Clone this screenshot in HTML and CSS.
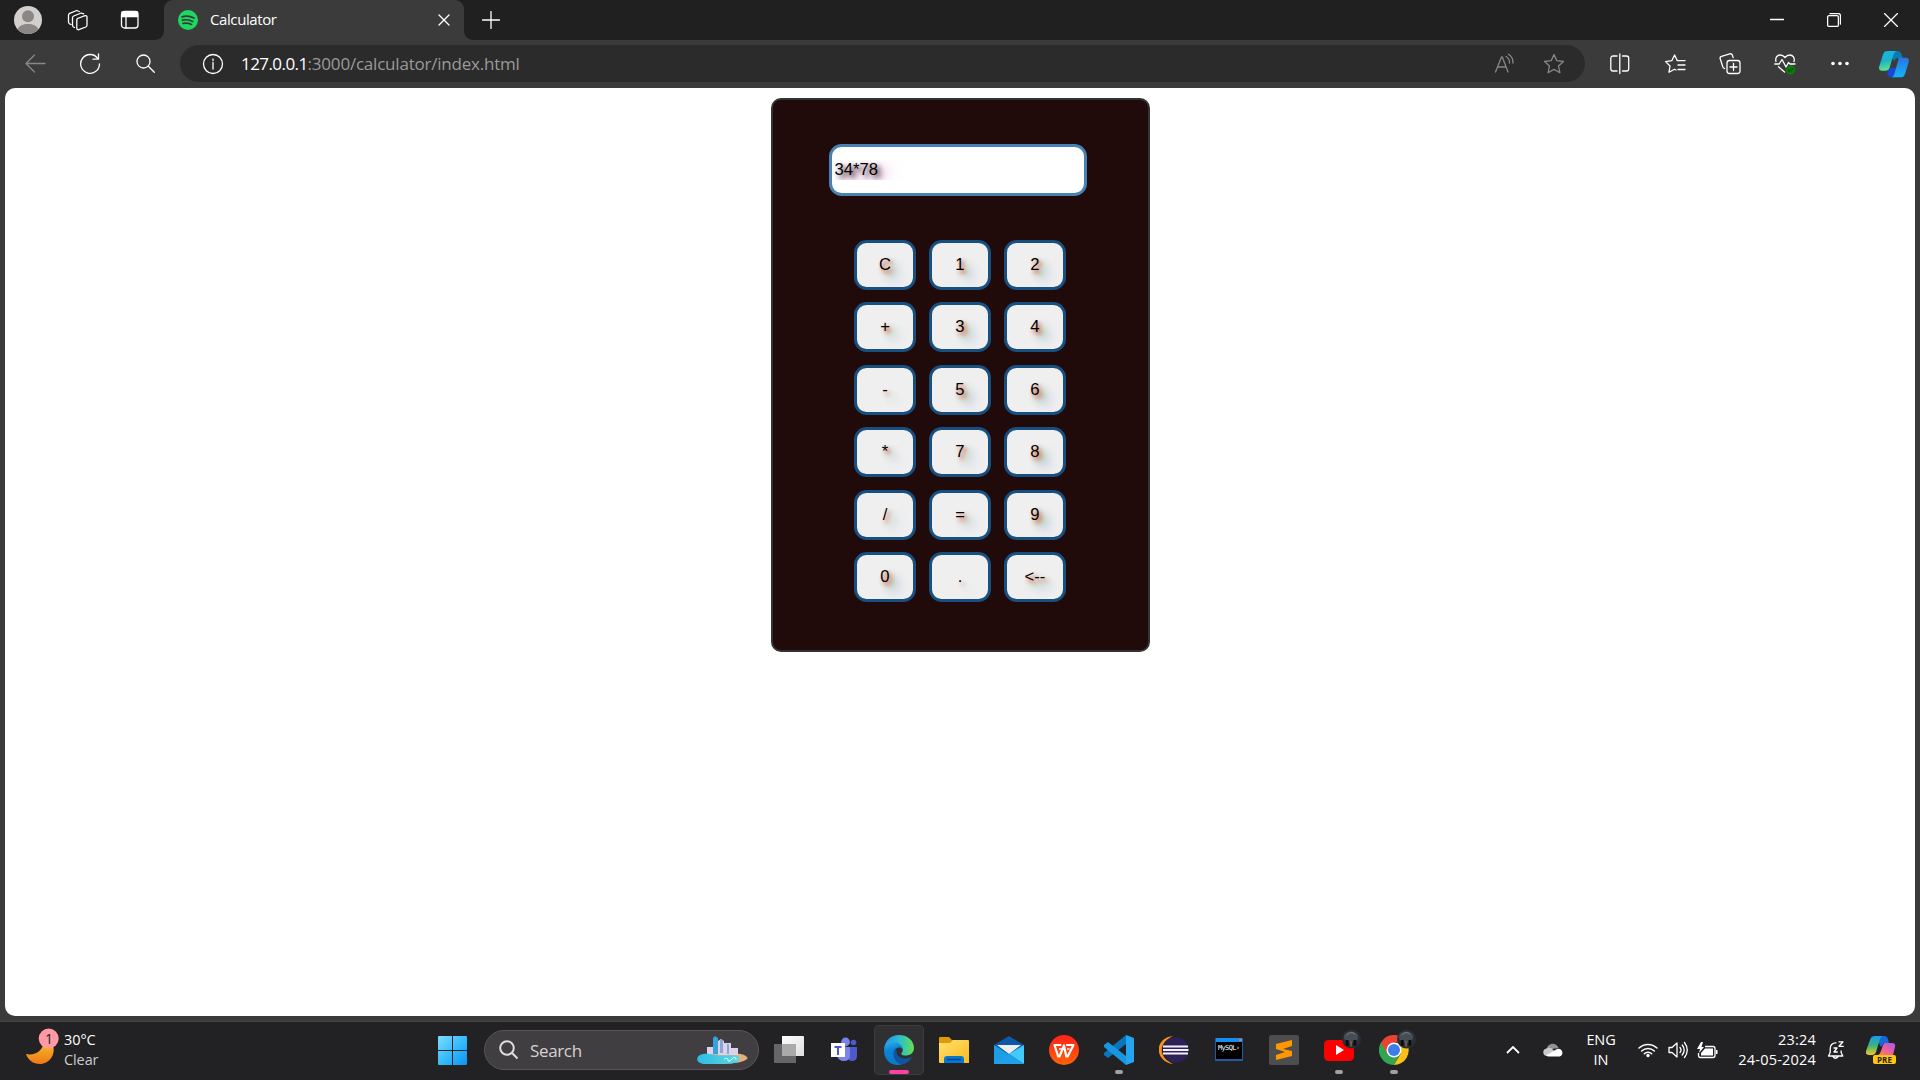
FILE: index.html
```html
<!DOCTYPE html>
<html lang="en">
<head>
<meta charset="utf-8">
<title>Calculator</title>
<link rel="stylesheet" href="styles.css">
</head>
<body>
<div class="desktop">
  <header class="tabbar">
    <div class="tab-tools">
      <svg class="avatar" viewBox="0 0 28 28"><circle cx="14" cy="14" r="14" fill="#d2d0ce"/><circle cx="14" cy="10.2" r="6" fill="#8a8785"/><path d="M3.500 23.200C5.500 19.500 9 18 14 18s8.500 1.500 10.500 5.200A14 14 0 0 1 3.500 23.200z" fill="#8a8785"/></svg>
      <svg class="workspaces line" viewBox="0 0 22 22"><path d="M10.500 9.500l7.500-2.800a1.500 1.500 0 0 1 2 1.400v8.200a2 2 0 0 1-1.200 1.700l-7 2.700a1.500 1.500 0 0 1-2-1.400v-8a2 2 0 0 1 .7-1.800zM7.500 18.500l-1-.5a2 2 0 0 1-1-1.700V8.800a2 2 0 0 1 1.200-1.800l7.500-3 2.500.9M4 15.500l-1.500-.7a2 2 0 0 1-1-1.700V6.200a2 2 0 0 1 1.200-1.800l7-2.900 2.500 1"/></svg>
      <svg class="tab-menu line" viewBox="0 0 20 20"><rect x="1.500" y="1.500" width="16.500" height="16.500" rx="3"/><path d="M2 2h15.500v4.500H2z" fill="#fff"/><path d="M6 6v12"/></svg>
    </div>
    <div class="tab">
      <svg class="favicon" viewBox="0 0 20 20"><circle cx="10" cy="10" r="10" fill="#1ed760"/><path d="M4 6.800q6.500-1.600 12 1.200M4.500 10.200q5.500-1.300 10.300 1.200M5 13.400q4.500-1 8.500 1" fill="none" stroke="#333b36" stroke-width="1.700" stroke-linecap="round"/></svg>
      <span class="tab-title">Calculator</span>
      <svg class="tab-close line" viewBox="0 0 12 12"><path d="M1 1l10 10M11 1L1 11"/></svg>
    </div>
    <svg class="new-tab line" viewBox="0 0 18 18"><path d="M9 .5v17M.5 9h17"/></svg>
    <div class="window-controls">
      <svg class="line" viewBox="0 0 14 14"><path d="M.5 6.500h13"/></svg>
      <svg class="line" viewBox="0 0 14 14"><rect x=".6" y="2.600" width="10.800" height="10.800" rx="1.500"/><path d="M3 .6h8.500a2 2 0 0 1 2 2V11"/></svg>
      <svg class="line" viewBox="0 0 14 14"><path d="M.5.5l13 13M13.500.5l-13 13"/></svg>
    </div>
  </header>
  <nav class="toolbar">
    <div class="nav-tools">
      <svg class="line dim" viewBox="0 0 22 22"><path d="M21 10.500H2M10.500 2L2 10.500l8.500 8.500"/></svg>
      <svg class="line" viewBox="0 0 22 22"><path d="M18.800 5.500A9.400 9.400 0 1 0 20.500 11M14 6.200h5.500V1"/></svg>
      <svg class="line" viewBox="0 0 22 22"><circle cx="9.500" cy="8.500" r="6.500"/><path d="M14.300 13.300l6 6"/></svg>
    </div>
    <div class="address">
      <svg class="line info" viewBox="0 0 22 22"><circle cx="11" cy="11" r="9.500"/><path d="M11 9.500v6.500M11 6v1.500"/></svg>
      <p class="url"><span class="host">127.0.0.1</span>:3000/calculator/index.html</p>
      <svg class="line dim read" viewBox="0 0 22 22"><path d="M1.500 19L7.500 4h.8l5.700 15M3.800 14h8.200M12 3.500a7 7 0 0 1 3.500 6.500M14.500 1.200A10 10 0 0 1 19 10"/></svg>
      <svg class="line dim star" viewBox="0 0 22 22"><path d="M11 1.600l2.800 6.100 6.700.8-5 4.600 1.400 6.600-5.900-3.300-5.900 3.300 1.400-6.600-5-4.600 6.700-.8z"/></svg>
    </div>
    <div class="browser-tools">
      <svg class="line" viewBox="0 0 22 22"><path d="M8 3H4a2.200 2.200 0 0 0-2.200 2.200v10.600A2.200 2.200 0 0 0 4 18h4M13.500 3h4a2.200 2.200 0 0 1 2.200 2.200v10.600a2.200 2.200 0 0 1-2.200 2.200h-4M10.800.8v19.800"/></svg>
      <svg class="line" viewBox="0 0 22 22"><path d="M12 17l-1.500-.8-5.500 3 1-6.200-4.400-4.400 6.200-.9L10.600 2l2.700 5.700H21M14 12h7M14 16.500h7"/></svg>
      <svg class="line" viewBox="0 0 22 22"><rect x="8" y="7.500" width="13" height="13" rx="2.500"/><path d="M14.500 10.500v7M11 14h7M5.500 15.500a2.500 2.500 0 0 1-1.800-2L1.200 5.800a2 2 0 0 1 1.300-2.500l8.200-2.400a2.300 2.300 0 0 1 2.800 1.500l.6 2.300"/></svg>
      <svg class="line" viewBox="0 0 22 22"><path d="M2 8.500C1 5 3 2 6.200 2 8.500 2 10 3.300 11 4.500 12 3.300 13.500 2 15.800 2 19 2 21 5 20 8.500M.8 11h4.400L8 6.500l4 7.500 2.500-4.500 1.500 1.500h5M4.500 13.800l6 5.200"/><circle cx="16.500" cy="17" r="4.700" fill="#0e7a0d" stroke="none"/><path d="M14.300 17l1.500 1.500 2.800-2.800" stroke="#074e07"/></svg>
      <svg viewBox="0 0 22 22" fill="#fff"><circle cx="4" cy="10.500" r="1.800"/><circle cx="11" cy="10.500" r="1.800"/><circle cx="18" cy="10.500" r="1.800"/></svg>
      <svg class="copilot" viewBox="0 0 30 28">
        <defs><linearGradient id="cpA" x2=".2" y2="1"><stop stop-color="#16b2ef"/><stop offset=".55" stop-color="#1cb4c6"/><stop offset="1" stop-color="#62e08c"/></linearGradient><linearGradient id="cpB" x2="0" y2="1"><stop stop-color="#2b74df"/><stop offset="1" stop-color="#12b6fa"/></linearGradient></defs>
        <path d="M8 1h10c2.500 0 4 1.200 4.800 4l1 3H19c-2 0-3 1-3.700 3z" fill="#087cb0"/>
        <path d="M8.500 1H18c-2 .5-3 2-3.600 4L10.500 18c-.6 2-2 2.700-4 2.700H3c-2.500 0-3.500-2-2.800-4.300L4 4.500C4.800 2 6 1 8.500 1z" fill="url(#cpA)"/>
        <path d="M8 20.500c1.700-.3 2.300-1 2.800-2.500h6L14 27h-2c-2 0-3-1-3.500-3z" fill="#1746dc"/>
        <path d="M19 7.700h8c2.400 0 3.400 2 2.700 4.200L26.200 23.500C25.300 26.500 24 27.300 21.500 27.300H12c2 0 2.800-1.800 3.300-3.500l4-13.500c.4-1.400.3-2.400-.3-2.600z" fill="url(#cpB)"/>
      </svg>
    </div>
  </nav>
  <main class="viewport">
    <section class="calculator">
      <div class="display"><span class="display-text">34*78</span></div>
      <div class="keys">
        <button class="key">C</button><button class="key">1</button><button class="key">2</button>
        <button class="key">+</button><button class="key">3</button><button class="key">4</button>
        <button class="key">-</button><button class="key">5</button><button class="key">6</button>
        <button class="key">*</button><button class="key">7</button><button class="key">8</button>
        <button class="key">/</button><button class="key">=</button><button class="key">9</button>
        <button class="key">0</button><button class="key">.</button><button class="key">&lt;--</button>
      </div>
    </section>
  </main>
  <footer class="taskbar">
    <div class="weather">
      <svg class="moon" viewBox="0 0 34 38"><defs><linearGradient id="mn" x2="0" y2="1"><stop stop-color="#f5c02c"/><stop offset="1" stop-color="#f07818"/></linearGradient></defs><path d="M1 26c9 2 17-3 18-13l9 4c3 10-4 19-13 19C8 36 3 32 1 26z" fill="url(#mn)"/><circle cx="23.700" cy="10.500" r="10" fill="#ff99a4"/><text class="badge-text" x="24" y="16" text-anchor="middle">1</text></svg>
      <p class="weather-text">30°C<br><span class="sky">Clear</span></p>
    </div>
    <svg class="start" viewBox="0 0 29 29"><defs><linearGradient id="st" gradientUnits="userSpaceOnUse" x2="29" y2="29"><stop stop-color="#7fdcff"/><stop offset=".5" stop-color="#36bdfb"/><stop offset="1" stop-color="#0c93f5"/></linearGradient></defs><path d="M0 1q0-1 1-1h13v14H0zM15 0h13q1 0 1 1v13H15zM0 15h14v14H1q-1 0-1-1zM15 15h14v13q0 1-1 1H15z" fill="url(#st)"/></svg>
    <div class="search">
      <svg class="lens" viewBox="0 0 20 20"><circle cx="8" cy="8" r="6.800"/><path d="M12.800 12.800l5.700 5.700"/></svg>
      <span class="search-text">Search</span>
      <svg class="city" viewBox="0 0 52 30"><defs><linearGradient id="sea"><stop stop-color="#2fbce8"/><stop offset="1" stop-color="#5ed6d8"/></linearGradient></defs><ellipse cx="28" cy="23" rx="23.500" ry="5.500" fill="#e5b080"/><path d="M11 12h6v7h-6zM22 6l3-2 3 2v14h-6zM28 8h7v12h-7zM35 13h7v7h-7z" fill="#dcd2ea"/><path d="M17 3l2-2 3 2v16h-5z" fill="#35a2e0"/><path d="M24 5h3v13h-3zM31 9h2v10h-2z" fill="#88a8d0"/><path d="M7 19c7-1 12 2 22 1.500 9-.5 16 0 14.500 4C42 28.500 35 29 26 29H9C0 29-2 21 7 19z" fill="url(#sea)"/><path d="M28 24q4-2 4 1t4-1 4 1" stroke="#dff" fill="none"/></svg>
    </div>
    <div class="apps">
      <div class="app"><svg viewBox="0 0 30 30"><defs><linearGradient id="tv" y2="1"><stop stop-color="#fff"/><stop offset="1" stop-color="#ddd"/></linearGradient></defs><path d="M8 1h21q1 0 1 1v19H8z" fill="url(#tv)"/><path d="M0 9h22v19H1q-1 0-1-1z" fill="#666"/><path d="M8 9h14v12H8z" fill="#aaa"/></svg></div>
      <div class="app"><svg viewBox="0 0 30 30"><circle cx="16.500" cy="7" r="4.400" fill="#7b83eb"/><circle cx="24.500" cy="7.500" r="2.800" fill="#5059c9"/><path d="M19 12h9v9q0 5-5 5-4 0-4-4z" fill="#5059c9"/><path d="M8 12h13v8q0 6-6 6t-7-6z" fill="#7b83eb"/><path d="M2 8h14v14H2z" fill="#fff"/><path d="M5.500 11h7v2H10v7H8v-7H5.500z" fill="#5059c9"/></svg></div>
      <div class="app current"><svg viewBox="0 0 30 30"><defs><linearGradient id="e1"><stop stop-color="#258de0"/><stop offset=".5" stop-color="#2bbdd4"/><stop offset="1" stop-color="#65df4c"/></linearGradient><linearGradient id="e2" x2=".2" y2="1"><stop stop-color="#36b5e8"/><stop offset=".4" stop-color="#0b86d8"/><stop offset="1" stop-color="#0b79c9"/></linearGradient></defs><path d="M.3 13C1.500 5 7 0 15 0c9 0 15 6 15 13 0 5-4 7.500-8.500 7.500-4 0-5-1.500-3.500-3C20.500 14 17 10 12 10z" fill="url(#e1)"/><path d="M.2 14C1 7 6 5.500 10 6.500c5 1 9 4.500 8.700 7.500-4-4-10 0-8.500 6.500C11 25 14 28 18 29.500 7 32-1 24 .2 14z" fill="url(#e2)"/><path d="M12 13c-5 4-3 14 6 16.500 5-1 8-4 10-7.500-8 4-15 0-15.500-5z" fill="#1055a3"/></svg></div>
      <div class="app"><svg viewBox="0 0 30 30"><defs><linearGradient id="fd" x2="1" y2="1"><stop stop-color="#ffe072"/><stop offset="1" stop-color="#fcbc1b"/></linearGradient></defs><path d="M0 3q0-1 1-1h9l3 3h5v5H0z" fill="#dd9b07"/><path d="M0 8h11l3-3h15q1 0 1 1v22H1q-1 0-1-1z" fill="url(#fd)"/><path d="M5 28v-4q0-3 3-3h14q3 0 3 3v4z" fill="#0877d0"/><path d="M8 24.500h14" stroke="#064986" stroke-width="1.500"/></svg></div>
      <div class="app"><svg viewBox="0 0 30 30"><path d="M0 10L15 1l15 9v12H0z" fill="#0c59a8"/><path d="M3 10h24L15 19z" fill="#eee"/><path d="M0 10l30 19H0z" fill="#1b9ee5"/><path d="M30 10v19L15 19z" fill="#42cbfa"/><path d="M0 29l15-10 15 10z" fill="#229fe9"/></svg></div>
      <div class="app"><svg viewBox="0 0 30 30"><defs><linearGradient id="wp" x2="0" y2="1"><stop stop-color="#ff2118"/><stop offset="1" stop-color="#ff6209"/></linearGradient></defs><circle cx="15" cy="15" r="15" fill="url(#wp)"/><path d="M11.500 10H5.500l3.700 11.500h1.300L15 10.500l2.300 11h1.300L24.500 10H18" fill="none" stroke="#fff" stroke-width="2.200" stroke-linejoin="round" stroke-linecap="round"/><path d="M10 14h3M18 14h2.500" stroke="#fff" stroke-width="1.300"/></svg></div>
      <div class="app running"><svg viewBox="0 0 30 30"><path d="M22 0l8 3v24l-8 3z" fill="#23a5f0"/><path d="M22 0v9L4 23l-4-3v-2z" fill="#0876bb"/><path d="M22 30v-9L4 7 0 10v2z" fill="#1697df"/></svg></div>
      <div class="app"><svg viewBox="0 0 30 30"><path d="M14 1C-5 3-5 26 14 29-1 22-1 8 14 1z" fill="#f7941e"/><circle cx="17" cy="15" r="12.700" fill="#2c2255"/><path d="M4 11.500h25M4 15h25.500M4 18.500h25" stroke="#f4efff" stroke-width="2"/></svg></div>
      <div class="app"><svg viewBox="0 0 30 30"><path d="M1 3h28v23H1z" fill="#235b9f"/><path d="M2 3h26v4H2z" fill="#178df0"/><path d="M2 7h26v17H2z" fill="#000"/><path d="M25 4h3v2h-3z" fill="#f56a57"/><text class="sql-text" x="4" y="15" textLength="22">MySQL›</text></svg></div>
      <div class="app"><svg viewBox="0 0 30 30"><rect width="30" height="30" rx="2" fill="#4d4d4d"/><path d="M23 5v6l-9 3 9 2v5L7 25v-5l9-3-9-3V9z" fill="#ff9800"/></svg></div>
      <div class="app running"><svg viewBox="0 0 30 30"><rect y="5" width="30" height="21" rx="4.500" fill="#f00"/><path d="M12 10v10l8-5z" fill="#fff"/></svg><svg class="profile" viewBox="0 0 20 20"><circle cx="10" cy="10" r="10" fill="#2a2f34"/><ellipse cx="9.500" cy="8" rx="7.500" ry="6" fill="#464d54"/><path d="M5 6q4-5 9-1" stroke="#78838c" fill="none"/><path d="M5.500 11v6M13.500 11v6" stroke="#0c0c0f" stroke-width="3"/><path d="M9 13h1v5H9z" fill="#a98570"/></svg></div>
      <div class="app running"><svg viewBox="0 0 30 30"><path d="M2 7.500A15 15 0 0 0 15 30l6.500-11.500z" fill="#30a651"/><path d="M15 8h13a15 15 0 0 1-13 22l7-12z" fill="#fbc116"/><path d="M2 7.500A15 15 0 0 1 28 7.500H15L8.500 19z" fill="#ea4335"/><circle cx="15" cy="15" r="7.500" fill="#fff"/><circle cx="15" cy="15" r="6" fill="#3b7de9"/></svg><svg class="profile" viewBox="0 0 20 20"><circle cx="10" cy="10" r="10" fill="#2a2f34"/><ellipse cx="9.500" cy="8" rx="7.500" ry="6" fill="#464d54"/><path d="M5 6q4-5 9-1" stroke="#78838c" fill="none"/><path d="M5.500 11v6M13.500 11v6" stroke="#0c0c0f" stroke-width="3"/><path d="M9 13h1v5H9z" fill="#a98570"/></svg></div>
    </div>
    <div class="tray">
      <svg class="chevron" viewBox="0 0 14 8"><path d="M1 7l6-6 6 6"/></svg>
      <svg class="cloud" viewBox="0 0 20 14"><path d="M3.500 7C4 0 13-1.500 15.500 5z" fill="#929292"/><path d="M4.500 13C-1 13-1 6 3.500 5.500 6 4 9 5 10 7l3 2v4z" fill="#c9c9c9"/><path d="M3 12.500L14 6c5-1.500 8 6 2.500 7.500H5z" fill="#fff"/></svg>
      <p class="lang">ENG<br>IN</p>
      <svg class="wifi" viewBox="0 0 20 16"><path d="M1 6a13 13 0 0 1 18 0M3.700 9a9 9 0 0 1 12.600 0M6.300 11.700a5.300 5.300 0 0 1 7.400 0" fill="none" stroke="#fff" stroke-width="1.500" stroke-linecap="round"/><circle cx="10" cy="13.500" r="1.700" fill="#fff"/></svg>
      <svg class="volume line" viewBox="0 0 20 18"><path d="M1 6.500h3l5-4.500v14l-5-4.500H1zM12 6.500q2 2.500 0 5M14.200 4q4 5 0 10M16.500 1.500q5.500 7.500 0 15"/></svg>
      <svg class="battery" viewBox="0 0 21 17"><path d="M8 4.500h8q2 0 2 2v7q0 2-2 2H3.500q-2 0-2-2V11" fill="none" stroke="#fff" stroke-width="1.300"/><path d="M8 6.500h8v7H4V11zM19 8h1.500v4H19zM4 0L0 7h3l-1 4 5-6H4.500l1.500-5z" fill="#fff"/></svg>
      <p class="clock">23:24<br>24-05-2024</p>
      <svg class="bell line" viewBox="0 0 18 19"><path d="M9 1.800C5 1.800 3.200 4.500 3.200 8v3.500L1.500 15h14.300l-1.700-3.500V10M6 15.500q2.500 3.500 5 0M7 7h3l-3 4h3.300M12 .8h4l-4 4.500h4.300"/></svg>
      <svg class="preview" viewBox="0 0 30 30"><defs><linearGradient id="p1" x2="0" y2="1"><stop stop-color="#159af2"/><stop offset=".5" stop-color="#3bb47b"/><stop offset="1" stop-color="#f2ca1d"/></linearGradient><linearGradient id="p2" x1="1" x2="0" y2="1"><stop stop-color="#a855f0"/><stop offset=".6" stop-color="#f26295"/><stop offset="1" stop-color="#fc8848"/></linearGradient></defs><path d="M9 1h9q3 0 4 3l1 4h-5l-3 4z" fill="#1768dd"/><path d="M9 1h8q-2 0-3 3l-4 13q-1 3-4 3H3q-4 0-3-4L4 5q1-4 5-4z" fill="url(#p1)"/><path d="M19 8h7q4 0 3 4l-2 8H12q2-1 3-4l2-6q1-2 2-2z" fill="url(#p2)"/><rect x="7" y="20" width="23" height="9" rx="2" fill="#ffc60b"/><text class="pre-text" x="18.500" y="27.500" text-anchor="middle">PRE</text></svg>
    </div>
  </footer>
</div>
</body>
</html>
```
FILE: styles.css
```css
* { box-sizing: border-box; }
body { margin: 0; font-family: "Open Sans", "Noto Sans", sans-serif; color: #fff; }
p { margin: 0; }
svg { display: block; flex: none; }
.desktop { display: flex; flex-direction: column; width: 1920px; height: 1080px; overflow: hidden; background: #3b3b3b; }
.line { fill: none; stroke: #fff; stroke-width: 1.3; stroke-linecap: round; stroke-linejoin: round; }
.dim { stroke: #878787; }

.tabbar { display: flex; align-items: center; height: 40px; background: linear-gradient(#202020 20px, #3b3b3b 20px); flex: none; }
.tab-tools { display: flex; align-items: center; width: 164px; height: 40px; padding-left: 14px; border-bottom-right-radius: 9px; background: #202020; }
.avatar { width: 28px; height: 28px; }
.workspaces { width: 22px; height: 22px; margin-left: 25px; }
.tab-menu { width: 20px; height: 20px; margin-left: 31px; }
.tab { display: flex; align-items: center; width: 300px; height: 40px; padding: 0 14px; border-radius: 9px 9px 0 0; background: #3b3b3b; }
.favicon { width: 20px; height: 20px; }
.tab-title { margin-left: 12px; padding-bottom: 2px; font-size: 15px; letter-spacing: -.4px; }
.tab-close { width: 12px; height: 12px; margin-left: auto; }
.new-tab { width: 54px; height: 40px; padding: 11px 18px; border-bottom-left-radius: 9px; background: #202020; }
.window-controls { display: flex; flex: 1; align-items: center; justify-content: flex-end; gap: 43px; height: 40px; padding-right: 22px; background: #202020; }
.window-controls svg { width: 14px; height: 14px; }

.toolbar { display: flex; align-items: center; height: 48px; padding: 0 0 1px 24px; flex: none; }
.nav-tools { display: flex; flex: none; gap: 33px; width: 156px; }
.nav-tools svg, .browser-tools svg { width: 22px; height: 22px; }
.address { display: flex; flex: none; align-items: center; width: 1405px; height: 37px; padding: 0 20px 0 22px; border-radius: 19px; background: #2b2b2b; }
.address svg { width: 22px; height: 22px; }
.url { margin-left: 17px; color: #9a9a9a; font-size: 17px; line-height: 24px; letter-spacing: -.21px; }
.host { color: #fff; letter-spacing: -.57px; }
.address .read { margin-left: auto; }
.address .star { margin-left: 27px; }
.browser-tools { display: flex; align-items: center; gap: 33px; margin-left: 24px; }
.browser-tools .copilot { width: 30px; height: 28px; margin-left: -5px; }

.viewport { display: flex; flex: none; align-items: flex-start; justify-content: center; width: 1910px; height: 928px; margin: 0 5px; padding-top: 10px; border-radius: 10px; background: #fff; }
.calculator { display: flex; flex-direction: column; align-items: center; width: 379px; height: 554px; padding-top: 44px; border: 2px solid #333; border-radius: 10px; background: #200a0a; font-family: "Liberation Sans", Arial, sans-serif; }
.display { display: flex; align-items: center; width: 258px; height: 52px; margin-right: 5px; padding: 0 3px; border: 3px solid #4682b4; border-radius: 12.5px; background: #fff; }
.display-text { width: 246px; overflow: hidden; color: #000; font-size: 16.67px; line-height: 20px; text-shadow: 3px 3px 5px rgba(50, 20, 20, .95), 6px 6px 9px rgba(180, 95, 174, .6), 12px 3px 14px rgba(229, 168, 229, .7); }
.keys { display: grid; grid-template-columns: repeat(3, 62px); gap: 12.5px 13px; margin-top: 43.8px; }
.key { height: 50px; padding: 0 0 .2px; border: 3px solid #164f80; border-radius: 12.5px; background: #efefef; color: #000; font: 16.67px "Liberation Sans", Arial, sans-serif; text-shadow: 2.5px 2.5px 4px #e0452a, 6px 6px 8px #62b862, 10px 10px 12px #a5a5f5; }

.taskbar { display: flex; align-items: center; height: 59px; margin-top: auto; padding-bottom: 2px; border-top: 1px solid #454545; background: #222124; flex: none; }
.weather { display: flex; align-items: center; width: 438px; padding-left: 25px; }
.moon { width: 34px; height: 38px; margin-top: -6px; }
.badge-text { font: 14px "Open Sans", sans-serif; fill: #222; }
.weather-text { margin-left: 5px; font-size: 14.5px; line-height: 20px; letter-spacing: -.1px; }
.sky { color: #ccc; }
.start { width: 29px; height: 29px; }
.search { display: flex; align-items: center; width: 275px; height: 40px; margin-left: 17px; padding: 0 10px 0 14px; border: 1px solid #59555a; border-radius: 20px; background: #403e41; }
.lens { width: 20px; height: 20px; fill: none; stroke: #ddd; stroke-width: 2; }
.search-text { margin-left: 11px; color: #d4d2d4; font-size: 17px; letter-spacing: -.35px; }
.city { width: 52px; height: 30px; margin-left: auto; }
.apps { display: flex; gap: 5px; margin-left: 5px; }
.app { position: relative; display: grid; place-items: center; width: 50px; height: 50px; border-radius: 5px; }
.app > svg { width: 30px; height: 30px; }
.current { background: #302f32; box-shadow: inset 0 0 0 1px #3c3b3e; }
.current::after, .running::after { content: ""; position: absolute; bottom: 1px; left: 21px; width: 8px; height: 4px; border-radius: 2px; background: #a0a0a0; }
.current::after { left: 15px; width: 20px; background: #ff429d; }
.app > .profile { position: absolute; top: 4px; right: 3px; width: 19px; height: 20px; }
.sql-text { font: 7px "DejaVu Sans Mono", monospace; fill: #fff; }
.tray { display: flex; flex: 1; align-items: center; justify-content: flex-end; padding-right: 24px; }
.chevron { width: 14px; height: 8px; fill: none; stroke: #fff; stroke-width: 1.8; }
.cloud { width: 20px; height: 14px; margin-left: 23px; }
.lang { width: 30px; margin-left: 23px; font-size: 14.5px; line-height: 20px; letter-spacing: -.1px; text-align: center; }
.wifi { width: 20px; height: 16px; margin-left: 22px; }
.volume { width: 20px; height: 18px; margin-left: 10px; }
.battery { width: 21px; height: 17px; margin-left: 9px; }
.clock { width: 90px; margin-left: 8px; font-size: 14.5px; line-height: 20px; letter-spacing: .2px; text-align: right; white-space: nowrap; }
.bell { width: 18px; height: 19px; margin-left: 11px; }
.preview { width: 30px; height: 30px; margin-left: 21px; }
.pre-text { font: bold 8px "Open Sans", sans-serif; fill: #222; }
```
